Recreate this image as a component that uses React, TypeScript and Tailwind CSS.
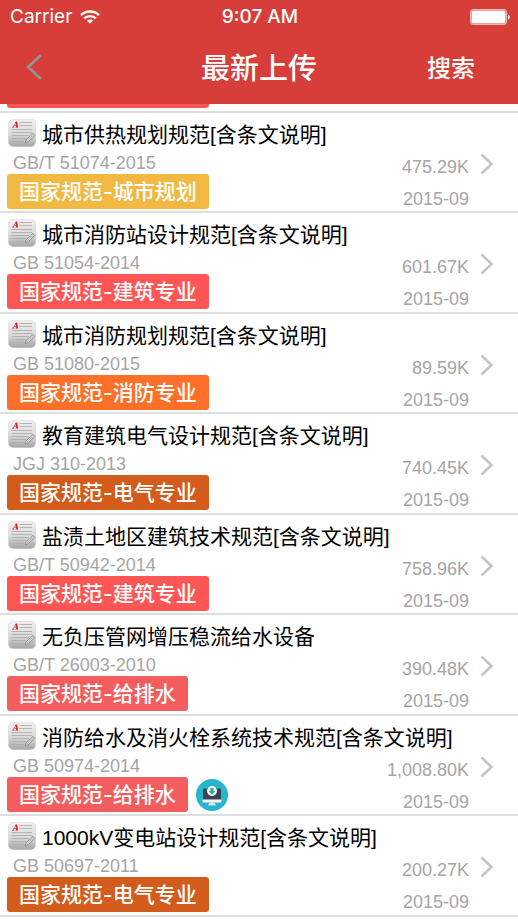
import clsx from 'clsx'

type Spec = {
  title: string
  code: string
  tag: string
  color: string
  size: string
  date: string
  downloaded?: boolean
}

const SPECS: Spec[] = [
  { title: '城市供热规划规范[含条文说明]', code: 'GB/T 51074-2015', tag: '国家规范-城市规划', color: 'bg-[#f2b942]', size: '475.29K', date: '2015-09' },
  { title: '城市消防站设计规范[含条文说明]', code: 'GB 51054-2014', tag: '国家规范-建筑专业', color: 'bg-[#fe5655]', size: '601.67K', date: '2015-09' },
  { title: '城市消防规划规范[含条文说明]', code: 'GB 51080-2015', tag: '国家规范-消防专业', color: 'bg-[#fe7029]', size: '89.59K', date: '2015-09' },
  { title: '教育建筑电气设计规范[含条文说明]', code: 'JGJ 310-2013', tag: '国家规范-电气专业', color: 'bg-[#d35b1b]', size: '740.45K', date: '2015-09' },
  { title: '盐渍土地区建筑技术规范[含条文说明]', code: 'GB/T 50942-2014', tag: '国家规范-建筑专业', color: 'bg-[#fe5655]', size: '758.96K', date: '2015-09' },
  { title: '无负压管网增压稳流给水设备', code: 'GB/T 26003-2010', tag: '国家规范-给排水', color: 'bg-[#f45d5e]', size: '390.48K', date: '2015-09' },
  { title: '消防给水及消火栓系统技术规范[含条文说明]', code: 'GB 50974-2014', tag: '国家规范-给排水', color: 'bg-[#f45d5e]', size: '1,008.80K', date: '2015-09', downloaded: true },
  { title: '1000kV变电站设计规范[含条文说明]', code: 'GB 50697-2011', tag: '国家规范-电气专业', color: 'bg-[#d35b1b]', size: '200.27K', date: '2015-09' },
]

function WifiIcon() {
  return (
    <svg viewBox="0 0 20 14" className="w-5 h-[14px]" fill="none" stroke="white" strokeWidth="2.3" aria-hidden="true">
      <path d="M1 5.1C6 .3 14 .3 19 5.1" />
      <path d="M4.2 8.4C7.5 5.3 12.5 5.3 15.8 8.4" />
      <path d="M6.9 10.6C8.7 9 11.3 9 13.1 10.6L10 13.8Z" fill="white" stroke="none" />
    </svg>
  )
}

function BatteryIcon() {
  return (
    <svg viewBox="0 0 40 16" className="w-10 h-4" aria-hidden="true">
      <rect x=".5" y=".5" width="36" height="15" rx="2.5" fill="none" stroke="white" strokeOpacity=".65" />
      <rect x="1.5" y="1.5" width="34" height="13" rx="1.5" fill="white" />
      <path d="M38 5.5C40.3 6 40.3 10 38 10.5Z" fill="white" />
    </svg>
  )
}

function DocIcon() {
  return (
    <svg viewBox="0 0 28 28" className="w-7 h-7 shrink-0" aria-hidden="true">
      <defs>
        <linearGradient id="paper" x1="0" y1="0" x2="0" y2="1">
          <stop offset="0" stopColor="#f0f0f0" />
          <stop offset=".55" stopColor="#dadada" />
          <stop offset="1" stopColor="#a4a4a4" />
        </linearGradient>
      </defs>
      <rect x=".3" y=".3" width="27.4" height="27.4" rx="5" fill="url(#paper)" stroke="#d0d0d0" strokeWidth=".5" />
      <path d="M11.5 3.5H24M11.5 6.5H24M3.5 10.5H24M3.5 13.5H24M3.5 16.5H21M3.5 19.5H18M3.5 22.5H16" stroke="#aeaeae" strokeWidth=".9" />
      <path d="M4 8.2H6.4M7.6 8.2H10.2M5 8.2L8.2 2.9M6.4 6.4H8.8" fill="none" stroke="#e05555" strokeWidth=".9" />
      <path d="M8.3 2.7L9.1 8.2" stroke="#d92020" strokeWidth="1.7" />
      <path d="M17.2 23.6L18.3 20.6L25 14.4L26.8 16.4L20.2 22.8Z" fill="#e3e3e3" stroke="#808080" strokeWidth=".8" />
      <path d="M19 22L25.7 15.6" stroke="#999999" strokeWidth=".7" />
    </svg>
  )
}

function DownloadedIcon() {
  return (
    <svg viewBox="0 0 32 32" className="w-8 h-8" aria-hidden="true">
      <circle cx="16" cy="16" r="16" fill="#27b4cd" />
      <path d="M7 9.5H25V21H7Z" fill="#3b4551" />
      <path d="M6.5 20.5H25.5V22.5A1 1 0 0 1 24.5 23.5H7.5A1 1 0 0 1 6.5 22.5Z" fill="#f3f5f6" />
      <path d="M13.5 23.5H18.5L20 26.5H12Z" fill="#dfe4e6" />
      <circle cx="16" cy="12" r="5" fill="#f5fafa" />
      <path d="M14.5 9H17.5V12H19.5L16 15.5L12.5 12H14.5Z" fill="#22ae91" />
    </svg>
  )
}

function Chevron() {
  return (
    <svg viewBox="0 0 14 22" className="w-[14px] h-[22px]" fill="none" stroke="#c4c4c9" strokeWidth="2.6" aria-hidden="true">
      <path d="M1.5 1.5L11.5 11L1.5 20.5" />
    </svg>
  )
}

function Tag({ text, color }: { text: string; color: string }) {
  return (
    <span
      className={clsx(
        "h-[35px] px-3 rounded-[3px] text-[21px] leading-[35px] font-medium text-white font-['Inter','Noto_Sans_CJK_SC',sans-serif]",
        color
      )}>
      {text}
    </span>
  )
}

function SpecRow({ spec }: { spec: Spec }) {
  return (
    <li className="border-b-2 border-[#dedede] h-[100px] even:h-[101px]">
      <a href="#" className="block pt-[6px]">
        <div className="flex items-start gap-[6px] pl-2">
          <DocIcon />
          <h2 className="text-[21px] leading-8 text-black whitespace-nowrap">{spec.title}</h2>
        </div>
        <div className="flex justify-between pt-px pl-[7px] pr-6">
          <div>
            <p className="pl-[6px] text-lg leading-[22px] text-[#a5a5a5]">{spec.code}</p>
            <div className="flex items-center gap-2">
              <Tag text={spec.tag} color={spec.color} />
              {spec.downloaded && <DownloadedIcon />}
            </div>
          </div>
          <div className="flex items-start gap-[11px]">
            <div className="flex flex-col gap-2 pt-[3px] text-lg leading-6 text-right text-[#a5a5a5]">
              <span>{spec.size}</span>
              <time>{spec.date}</time>
            </div>
            <div className="pt-px">
              <Chevron />
            </div>
          </div>
        </div>
      </a>
    </li>
  )
}

export default function App() {
  return (
    <div className="min-h-screen bg-white font-['Liberation_Sans','Noto_Sans_CJK_SC',sans-serif]">
      <header className="sticky top-0 z-10 bg-[#d83e39] text-white">
        {/* Status bar */}
        <div className="grid grid-cols-3 items-center h-[34px] pl-[10px] pr-2 font-['Inter',sans-serif] text-[19px]">
          <div className="flex items-center gap-2">
            <span>Carrier</span>
            <WifiIcon />
          </div>
          <span className="text-center font-medium whitespace-nowrap">9:07 AM</span>
          <div className="flex justify-end">
            <BatteryIcon />
          </div>
        </div>

        {/* Nav bar */}
        <div className="grid grid-cols-[1fr_auto_1fr] items-center h-[70px] px-6 pb-1 font-['Noto_Sans_CJK_SC',sans-serif]">
          <button type="button" aria-label="返回" className="justify-self-start">
            <svg viewBox="0 0 20 28" className="w-5 h-7" fill="none" stroke="#8e9696" strokeWidth="2.6" aria-hidden="true">
              <path d="M17 2L4 14L17 26" />
            </svg>
          </button>
          <h1 className="text-[29px] font-medium whitespace-nowrap">最新上传</h1>
          <button type="button" className="justify-self-end pr-[19px] text-2xl font-medium">搜索</button>
        </div>
      </header>

      {/* Tail of the row that is scrolled under the header */}
      <div className="flex items-end justify-between h-[9px] overflow-hidden border-b-2 border-[#dedede] pl-[7px] pr-[49px]">
        <div className="flex pb-[3px]">
          <Tag text="国家规范-建筑专业" color="bg-[#fe5655]" />
        </div>
        <time className="pb-px text-lg leading-6 text-[#a5a5a5]">2015-09</time>
      </div>

      <ul>
        {SPECS.map((spec) => (
          <SpecRow key={spec.title} spec={spec} />
        ))}
      </ul>
    </div>
  )
}
